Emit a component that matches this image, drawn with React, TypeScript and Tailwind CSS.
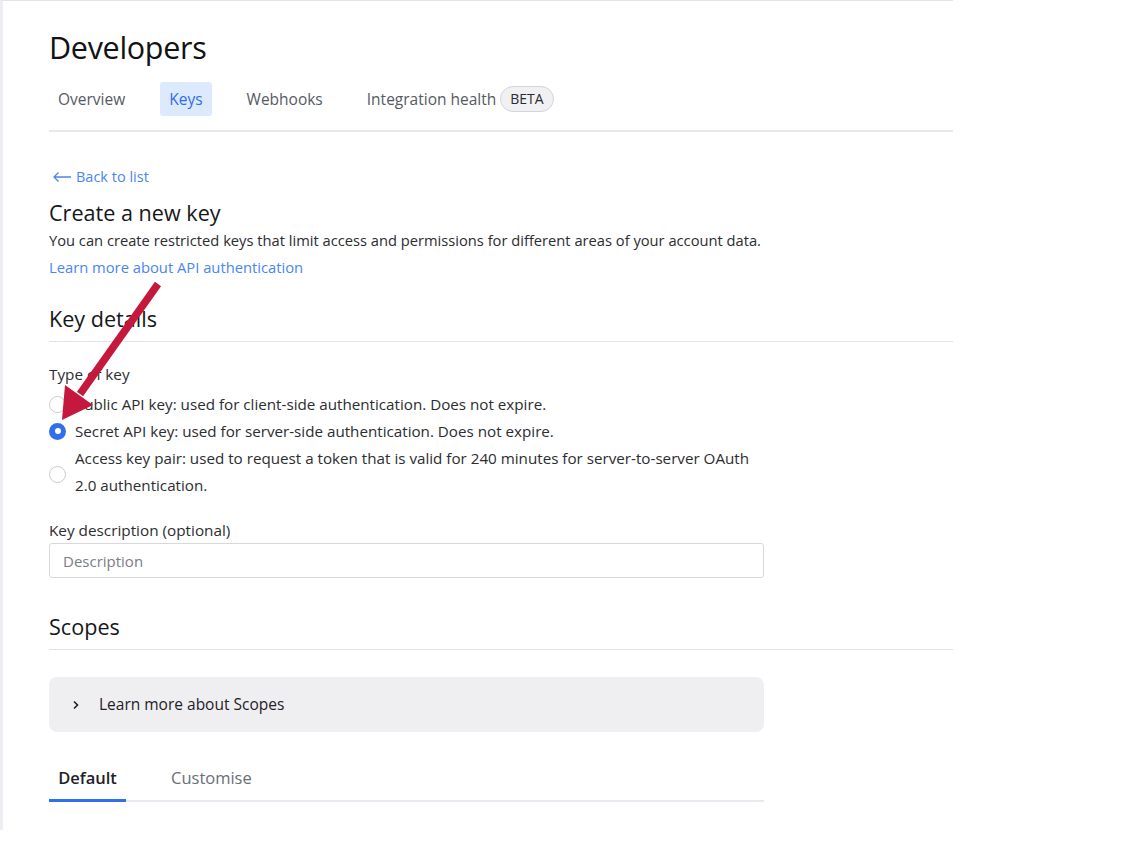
import { useState } from "react";

const tabs = ["Overview", "Keys", "Webhooks", "Integration health"];

const keyTypes = [
  { id: "public", label: "Public API key: used for client-side authentication. Does not expire." },
  { id: "secret", label: "Secret API key: used for server-side authentication. Does not expire." },
  {
    id: "pair",
    label:
      "Access key pair: used to request a token that is valid for 240 minutes for server-to-server OAuth 2.0 authentication.",
  },
];

const Radio = ({ checked }: { checked: boolean }) =>
  checked ? (
    <span className="mt-[5px] flex h-[17px] w-[17px] shrink-0 items-center justify-center rounded-full bg-[#2f6fed]">
      <span className="h-[6px] w-[6px] rounded-full bg-white" />
    </span>
  ) : (
    <span className="mt-[5px] h-[17px] w-[17px] shrink-0 rounded-full border border-[#c9cbd0] bg-white" />
  );

const App = () => {
  const [keyType, setKeyType] = useState("secret");
  const [scopeTab, setScopeTab] = useState("Default");

  return (
    <div className="relative h-[830px] w-[953px] border-l-[3px] border-t border-l-[#eceef2] border-t-[#e4e5ea] bg-white pl-[46px] font-['Open_Sans',sans-serif] text-[#1f2126]">
      <h1 className="pt-[27px] text-[30.5px] leading-[38px] tracking-[-0.3px] text-[#111214]">Developers</h1>

      {/* top tabs */}
      <div className="mt-[16px] flex items-center gap-[26px] border-b-2 border-[#e8e9ee] pb-[14px] text-[15.5px] leading-[20px]">
        {tabs.map((t) => (
          <div key={t} className="flex items-center">
            <span
              className={
                t === "Keys"
                  ? "rounded-[3px] bg-[#dde9fd] px-[9px] py-[7px] text-[#2f6fed]"
                  : "px-[9px] py-[7px] text-[#565a63]"
              }
            >
              {t}
            </span>
            {t === "Integration health" && (
              <span className="-ml-[5px] rounded-full border border-[#d3d5da] bg-[#f1f1f3] px-[9px] py-[2px] text-[14px] text-[#2a2c31]">
                BETA
              </span>
            )}
          </div>
        ))}
      </div>

      <a className="mt-[35px] flex items-center gap-[4px] pl-[3px] text-[14.5px] leading-[20px] text-[#4a86f0]">
        <svg width="20" height="12" viewBox="0 0 20 12" fill="none" stroke="#4a86f0" strokeWidth="1.3">
          <path d="M19 6H2M6.5 1.5 2 6l4.5 4.5" />
        </svg>
        Back to list
      </a>

      <h2 className="mt-[12px] text-[21.6px] leading-[28px] text-[#16171a]">Create a new key</h2>
      <p className="mt-[3px] text-[14.7px] leading-[20px] text-[#2b2d31]">
        You can create restricted keys that limit access and permissions for different areas of your account data.
      </p>
      <a className="mt-[7px] block text-[14.75px] leading-[20px] text-[#4a86f0]">Learn more about API authentication</a>

      <h2 className="mt-[28px] border-b border-[#e1e3e8] pb-[8px] text-[21.6px] leading-[28px] text-[#16171a]">
        Key details
      </h2>

      <div className="mt-[22px] text-[15.3px] font-medium leading-[20px] text-[#2b2d31]">Type of key</div>
      <div className="mt-[6.5px] w-[720px] text-[15.2px] text-[#2b2d31]">
        {keyTypes.map((k) => (
          <label
            key={k.id}
            onClick={() => setKeyType(k.id)}
            className={`flex gap-[9px] leading-[27px] ${k.id === "pair" ? "items-center" : "items-start"}`}
          >
            <Radio checked={keyType === k.id} />
            <span className={k.id === "pair" ? "w-[688px]" : ""}>{k.label}</span>
          </label>
        ))}
      </div>

      <div className="mt-[21.5px] text-[15.3px] font-medium leading-[20px] text-[#2b2d31]">Key description (optional)</div>
      <input
        placeholder="Description"
        className="mt-[3px] block h-[35px] w-[715px] rounded-[3px] border border-[#d6d8dd] px-[13px] text-[15px] outline-none placeholder:text-[#7a7d85]"
      />

      <h2 className="mt-[35px] border-b border-[#e1e3e8] pb-[8px] text-[21.6px] leading-[28px] text-[#16171a]">Scopes</h2>

      {/* accordion */}
      <div className="mt-[27px] flex h-[55px] w-[715px] items-center rounded-[8px] bg-[#efeff1] pl-[22px] text-[15.5px] text-[#1f2126]">
        <svg width="10" height="10" viewBox="0 0 10 10" fill="none" stroke="#1f2126" strokeWidth="1.6">
          <path d="M3 1.5 6.5 5 3 8.5" />
        </svg>
        <span className="ml-[18px]">Learn more about Scopes</span>
      </div>

      {/* scope tabs */}
      <div className="mt-[36px] flex w-[715px] border-b-2 border-[#e8e9ee] text-[16.5px] leading-[20px]">
        {["Default", "Customise"].map((t) => (
          <button
            key={t}
            onClick={() => setScopeTab(t)}
            className={`-mb-[2px] pb-[11px] ${
              t === scopeTab
                ? "w-[77px] border-b-[3px] border-[#2f6fed] font-semibold text-[#1f2126]"
                : "ml-[45px] border-b-[3px] border-transparent text-[#6b6e76]"
            }`}
          >
            {t}
          </button>
        ))}
      </div>

      {/* annotation arrow */}
      <svg className="pointer-events-none absolute left-[-3px] top-[-1px]" width="200" height="440" viewBox="0 0 200 440">
        <path d="M158 284 80 394" stroke="#c4183c" strokeWidth="7.5" />
        <polygon points="62,420 65,385 93,405" fill="#c4183c" />
      </svg>
    </div>
  );
};

export default App;
